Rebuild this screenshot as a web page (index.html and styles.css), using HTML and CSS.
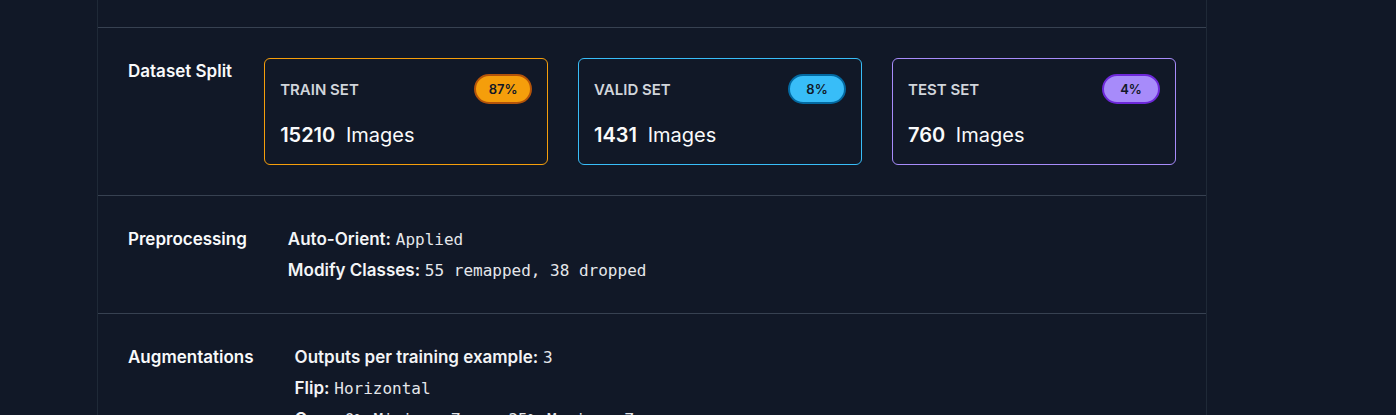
FILE: index.html
```html
<!DOCTYPE html>
<html lang="en">

<head>
    <meta charset="UTF-8">
    <meta name="viewport" content="width=device-width, initial-scale=1.0">
    <title>Dataset Version</title>
    <link rel="stylesheet" href="styles.css">
</head>

<body>
    <div class="panel">
        <div class="row row-top"></div>

        <div class="row row-split">
            <div class="row-label">Dataset Split</div>
            <div class="split-cards">
                <div class="split-card train">
                    <div class="split-head">
                        <span class="split-name">Train Set</span>
                        <span class="badge">87%</span>
                    </div>
                    <div class="split-count"><b>15210</b> Images</div>
                </div>
                <div class="split-card valid">
                    <div class="split-head">
                        <span class="split-name">Valid Set</span>
                        <span class="badge">8%</span>
                    </div>
                    <div class="split-count"><b>1431</b> Images</div>
                </div>
                <div class="split-card test">
                    <div class="split-head">
                        <span class="split-name">Test Set</span>
                        <span class="badge">4%</span>
                    </div>
                    <div class="split-count"><b>760</b> Images</div>
                </div>
            </div>
        </div>

        <div class="row">
            <div class="row-label">Preprocessing</div>
            <div class="row-values">
                <div class="value-line"><span class="key">Auto-Orient:</span> <code>Applied</code></div>
                <div class="value-line"><span class="key">Modify Classes:</span> <code>55 remapped, 38 dropped</code></div>
            </div>
        </div>

        <div class="row">
            <div class="row-label">Augmentations</div>
            <div class="row-values aug">
                <div class="value-line"><span class="key">Outputs per training example:</span> <code>3</code></div>
                <div class="value-line"><span class="key">Flip:</span> <code>Horizontal</code></div>
                <div class="value-line"><span class="key">Crop:</span> <code>0% Minimum Zoom, 25% Maximum Zoom</code></div>
            </div>
        </div>
    </div>
</body>

</html>
```
FILE: styles.css
```css
body {
    font-family: Inter, 'Noto Sans', Arial, sans-serif;
    background-color: #111827;
    color: #f3f4f6;
    margin: 0;
    height: 415px;
    overflow: hidden;
}

.panel {
    width: 1108px;
    margin-left: 97px;
    border-left: 1px solid #1f2937;
    border-right: 1px solid #1f2937;
    min-height: 415px;
}

.row {
    display: flex;
    gap: 41px;
    padding: 31px 30px 30px;
    border-top: 1px solid #374151;
}

.row-top {
    border-top: none;
    padding: 0;
    height: 27px;
}

.row-split {
    gap: 32px;
    padding-top: 30px;
}

.row-label {
    font-size: 17px;
    font-weight: 600;
    line-height: 25px;
    color: #f9fafb;
    flex-shrink: 0;
}

.row-split .row-label {
    margin-top: 1px;
}

/* split cards */
.split-cards {
    flex: 1;
    display: flex;
    gap: 30px;
}

.split-card {
    flex: 1;
    border: 1px solid #f59e0b;
    border-radius: 6px;
    padding: 15px;
}

.split-card.valid {
    border-color: #38bdf8;
}

.split-card.test {
    border-color: #a78bfa;
}

.split-head {
    display: flex;
    justify-content: space-between;
    align-items: center;
    height: 30px;
}

.split-name {
    font-size: 15px;
    font-weight: 600;
    text-transform: uppercase;
    color: #d1d5db;
}

.badge {
    display: inline-block;
    min-width: 30px;
    height: 26px;
    line-height: 26px;
    padding: 0 12px;
    border-radius: 15px;
    font-size: 13px;
    font-weight: 600;
    text-align: center;
    color: #111827;
    background-color: #f59e0b;
    border: 2px solid #b45309;
}

.valid .badge {
    background-color: #38bdf8;
    border-color: #0369a1;
}

.test .badge {
    background-color: #a78bfa;
    border-color: #6d28d9;
}

.split-count {
    margin-top: 17px;
    font-size: 20px;
    line-height: 28px;
    color: #f9fafb;
}

.split-count b {
    font-weight: 600;
    margin-right: 5px;
}

/* key / value lines */
.row-values {
    display: flex;
    flex-direction: column;
    gap: 6px;
}

.value-line {
    font-size: 17px;
    line-height: 25px;
    color: #f3f4f6;
}

.key {
    font-weight: 600;
}

code {
    font-family: 'DejaVu Sans Mono', 'Liberation Mono', monospace;
    font-size: 16px;
    line-height: 1;
    color: #e5e7eb;
}
```
